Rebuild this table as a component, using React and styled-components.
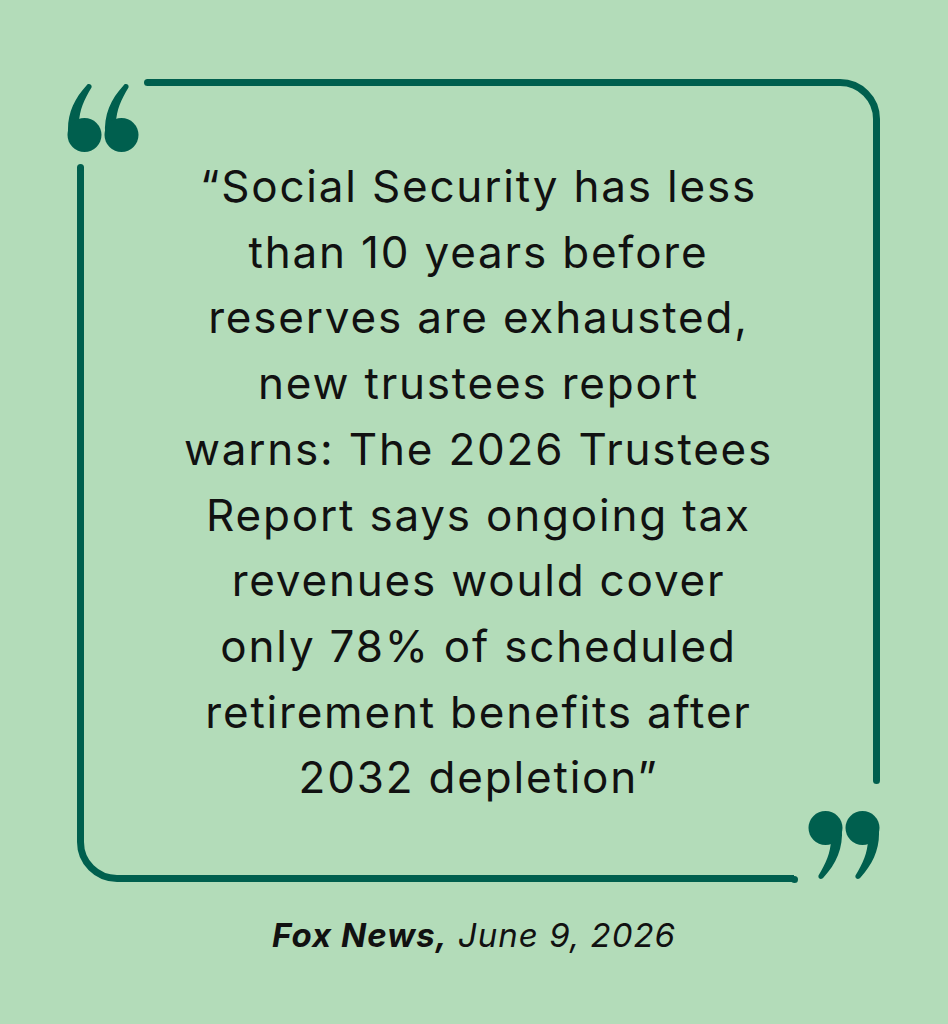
import styled, { createGlobalStyle } from "styled-components";

const GlobalStyle = createGlobalStyle`
  html, body {
    margin: 0;
    padding: 0;
    background: #b3dcb9;
  }
`;

const Page = styled.div`
  width: 948px;
  height: 1024px;
  box-sizing: border-box;
  padding: 79px 68px 0 77px;
  display: flex;
  flex-direction: column;
  align-items: center;
  font-family: Inter, "Open Sans", sans-serif;
  color: #111;
`;

const Frame = styled.div`
  position: relative;
  width: 803px;
  height: 803px;
  box-sizing: border-box;
  border: 7px solid #005f4e;
  border-radius: 40px;
  display: flex;
  align-items: center;
  justify-content: center;
  padding-top: 4px;
`;

const Quote = styled.div`
  display: flex;
  flex-direction: column;
  align-items: center;
  font-size: 44px;
  line-height: 65.7px;
  letter-spacing: 1.8px;
`;

const Line = styled.span`
  display: block;
  white-space: nowrap;
`;

const Badge = styled.div`
  position: absolute;
  background: #b3dcb9;
  box-sizing: border-box;
  display: flex;

  &::before,
  &::after {
    content: "";
    position: absolute;
    width: 7px;
    height: 7px;
    border-radius: 50%;
    background: #005f4e;
  }
`;

const OpenBadge = styled(Badge)`
  left: -24px;
  top: -26px;
  width: 87px;
  height: 107px;
  padding: 23px 0 0 7px;

  &::before { left: 84px; top: 19px; }
  &::after { left: 17px; top: 104px; }
`;

const CloseBadge = styled(Badge)`
  left: 710px;
  top: 694px;
  width: 96px;
  height: 110px;
  padding: 30px 0 0 14px;

  &::before { left: -3.5px; top: 96px; }
  &::after { left: 79px; top: -3.5px; }
`;

const Caption = styled.div`
  margin-top: 33px;
  margin-left: -9px;
  font-size: 33px;
  font-style: italic;
  letter-spacing: 1px;

  b {
    font-weight: 700;
  }
`;

function QuoteMark({ flip }) {
  const mark =
    "M19.5 2.5 C21 0 25.5 1 24.5 4.5 C17 17 12.5 27 12 40 L1.2 52 C-0.5 32 7 16 19.5 2.5 Z";
  return (
    <svg width="72" height="70" viewBox="0 0 72 70">
      <g fill="#005f4e" transform={flip ? "rotate(180 36 35)" : undefined}>
        <path d={mark} />
        <ellipse cx="17.5" cy="52" rx="17" ry="17" />
        <path d={mark} transform="translate(37 0)" />
        <ellipse cx="54.5" cy="52" rx="17" ry="17" />
      </g>
    </svg>
  );
}

const lines = [
  "\u201CSocial Security has less",
  "than 10 years before",
  "reserves are exhausted,",
  "new trustees report",
  "warns: The 2026 Trustees",
  "Report says ongoing tax",
  "revenues would cover",
  "only 78% of scheduled",
  "retirement benefits after",
  "2032 depletion\u201D",
];

export default function App() {
  return (
    <>
      <GlobalStyle />
      <Page>
        <Frame>
          <OpenBadge>
            <QuoteMark />
          </OpenBadge>
          <Quote>
            {lines.map((l) => (
              <Line key={l}>{l}</Line>
            ))}
          </Quote>
          <CloseBadge>
            <QuoteMark flip />
          </CloseBadge>
        </Frame>
        <Caption>
          <b>Fox News,</b> June 9, 2026
        </Caption>
      </Page>
    </>
  );
}
